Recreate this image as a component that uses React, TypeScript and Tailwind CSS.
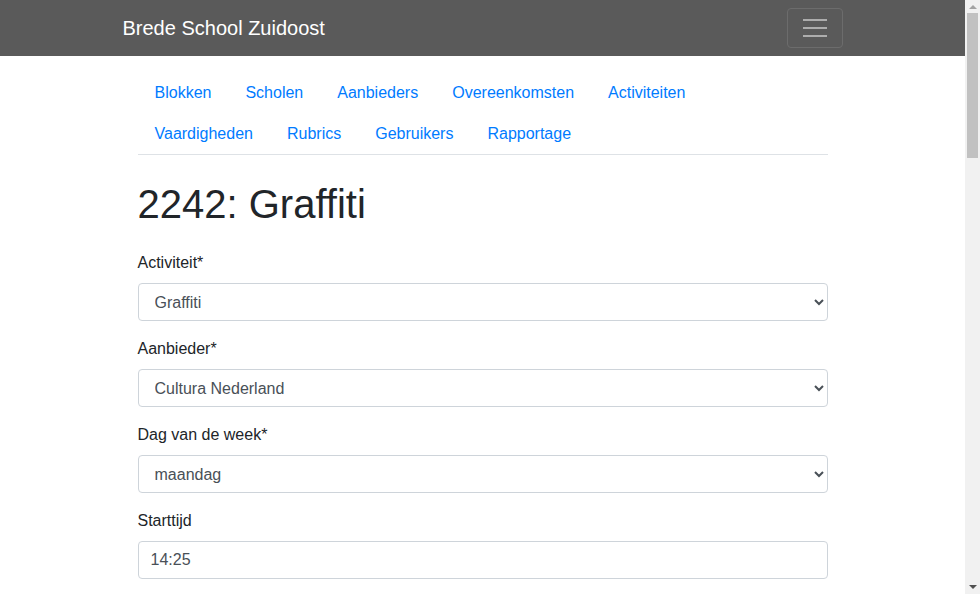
import React from "react";

const links = [
  "Blokken",
  "Scholen",
  "Aanbieders",
  "Overeenkomsten",
  "Activiteiten",
  "Vaardigheden",
  "Rubrics",
  "Gebruikers",
  "Rapportage",
];

const fieldClass =
  "block w-full h-[38px] px-3 py-[6px] text-base leading-6 text-[#495057] bg-white border border-[#ced4da] rounded";

const areaClass =
  "block w-full h-[150px] px-3 py-[6px] text-base text-[#495057] bg-white border border-[#ced4da] rounded";

function Field({ label, children }: { label: string; children: React.ReactNode }) {
  return (
    <div className="mb-4">
      <label className="block mb-2 leading-6">{label}</label>
      {children}
    </div>
  );
}

function Select({ value, options }: { value: string; options: string[] }) {
  return (
    <select className={fieldClass} defaultValue={value}>
      {options.map((o) => (
        <option key={o}>{o}</option>
      ))}
    </select>
  );
}

// fake browser scrollbar, the reference page is much taller than the window
function Scrollbar() {
  return (
    <div className="fixed top-0 right-0 w-[15px] h-screen bg-[#f1f1f1]">
      <div className="absolute left-[4px] top-[5px] w-0 h-0 border-l-[4px] border-r-[4px] border-b-[4px] border-l-transparent border-r-transparent border-b-[#a3a3a3]" />
      <div className="absolute left-[2px] top-[13px] w-[11px] h-[145px] bg-[#c1c1c1]" />
      <div className="absolute left-[4px] bottom-[5px] w-0 h-0 border-l-[4px] border-r-[4px] border-t-[4px] border-l-transparent border-r-transparent border-t-[#505050]" />
    </div>
  );
}

export default function App() {
  return (
    <div className="min-h-screen bg-white text-[#212529] font-['Liberation_Sans',Arial,sans-serif] text-base">
      <div className="mr-[15px]">
        <nav className="bg-[#5a5a5a] h-14 py-2">
          <div className="w-[720px] mx-auto flex items-center justify-between">
            <a className="text-white text-xl leading-[30px] py-[5px]">Brede School Zuidoost</a>
            <button className="w-14 h-10 border border-[#6c6c6c] rounded flex flex-col items-center justify-center gap-[6px]">
              <span className="block w-6 h-[2px] bg-[#adadad]" />
              <span className="block w-6 h-[2px] bg-[#adadad]" />
              <span className="block w-6 h-[2px] bg-[#adadad]" />
            </button>
          </div>
        </nav>

        <div className="w-[720px] mx-auto px-[15px]">
          <ul className="flex flex-wrap mt-4 border-b border-[#dee2e6]">
            {links.map((l) => (
              <li key={l}>
                <a className="block px-[17px] py-2 leading-[25px] text-[#007bff]">{l}</a>
              </li>
            ))}
          </ul>

          <h1 className="mt-[25px] mb-[23px] text-[40px] leading-[48px] font-normal">2242: Graffiti</h1>

          <form>
            <Field label="Activiteit*">
              <Select value="Graffiti" options={["Graffiti", "Breakdance", "Voetbal", "Theater"]} />
            </Field>
            <Field label="Aanbieder*">
              <Select value="Cultura Nederland" options={["Cultura Nederland", "Sportbedrijf", "Muziekschool"]} />
            </Field>
            <Field label="Dag van de week*">
              <Select value="maandag" options={["maandag", "dinsdag", "woensdag", "donderdag", "vrijdag"]} />
            </Field>
            <Field label="Starttijd">
              <input className={fieldClass} defaultValue="14:25" />
            </Field>
            <Field label="Eindtijd">
              <input className={fieldClass} defaultValue="15:25" />
            </Field>
            <Field label="Blok*">
              <Select value="Blok 1" options={["Blok 1", "Blok 2", "Blok 3", "Blok 4"]} />
            </Field>
            <Field label="School*">
              <Select value="De Kameleon" options={["De Kameleon", "De Polsstok", "Het Gein"]} />
            </Field>
            <Field label="Locatie">
              <input className={fieldClass} defaultValue="Gymzaal" />
            </Field>
            <Field label="Minimum aantal deelnemers">
              <input className={fieldClass} defaultValue="8" />
            </Field>
            <Field label="Maximum aantal deelnemers">
              <input className={fieldClass} defaultValue="15" />
            </Field>
            <Field label="Groepen">
              <input className={fieldClass} defaultValue="5, 6, 7, 8" />
            </Field>
            <Field label="Prijs">
              <input className={fieldClass} defaultValue="0.00" />
            </Field>
            <Field label="Docent">
              <input className={fieldClass} defaultValue="" />
            </Field>
            <Field label="Omschrijving">
              <textarea className={areaClass} defaultValue="" />
            </Field>
            <Field label="Opmerkingen">
              <textarea className={areaClass} defaultValue="" />
            </Field>
            <Field label="Vaardigheden">
              <Select value="Creativiteit" options={["Creativiteit", "Samenwerken", "Motoriek"]} />
            </Field>
            <Field label="Rubric">
              <Select value="Standaard" options={["Standaard", "Uitgebreid"]} />
            </Field>
            <Field label="Status">
              <Select value="Actief" options={["Actief", "Inactief"]} />
            </Field>
            <div className="flex gap-2 mt-2 mb-12">
              <button type="button" className="px-3 py-[6px] rounded bg-[#007bff] text-white border border-[#007bff]">
                Opslaan
              </button>
              <button type="button" className="px-3 py-[6px] rounded bg-[#6c757d] text-white border border-[#6c757d]">
                Annuleren
              </button>
            </div>
          </form>
        </div>
      </div>
      <Scrollbar />
    </div>
  );
}
